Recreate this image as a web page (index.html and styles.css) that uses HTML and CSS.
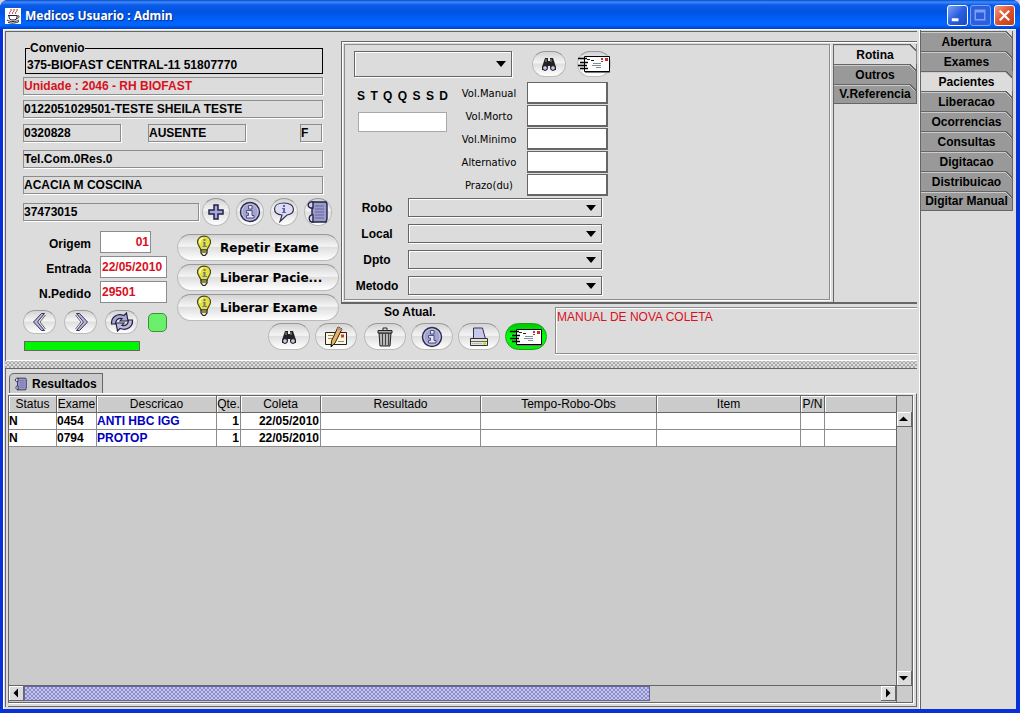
FILE: index.html
```html
<!DOCTYPE html>
<html lang="pt-BR">
<head>
<meta charset="utf-8">
<title>Medicos Usuario : Admin</title>
<link rel="stylesheet" href="styles.css">
</head>
<body>
<svg class="defs" aria-hidden="true">
  <symbol id="i-binoc" viewBox="0 0 16 16">
    <path d="M4 2h3v3h2V2h3l1 3 2 6v3h-5l-1-4H7l-1 4H1v-3l2-6z" fill="#222"/>
    <path d="M5 3v3M10 3v3" stroke="#999"/>
    <circle cx="4" cy="12" r="2.4" fill="#c5c8f0" stroke="#111"/><circle cx="12" cy="12" r="2.4" fill="#c5c8f0" stroke="#111"/>
  </symbol>
  <symbol id="i-mail" viewBox="0 0 34 20">
    <path d="M8 5h25v14H8z" fill="#777"/>
    <path d="M7.500 2.500h25v15h-25z" fill="#fff" stroke="#000"/>
    <path d="M1 4.500h9M3 8.500h8M1 11.500h9M3 14.500h8" stroke="#000" stroke-width="1.500"/>
    <path d="M10 5.500h3M14 6.500h3" stroke="#222"/>
    <path d="M16 9.500h8M15 11.500h9M19 13.500h5" stroke="#7a8f9a"/>
    <path d="M24 4h2v2h-2zM24 7h2v1h-2zM28 4h3v3h-3z" fill="#b33"/>
  </symbol>
  <symbol id="i-info" viewBox="0 0 22 22">
    <circle cx="11" cy="11" r="9.500" fill="#a3a3d0" stroke="#28284c" stroke-width="1.400"/>
    <circle cx="11" cy="11" r="8" fill="none" stroke="#c5c5e6"/>
    <path d="M9.500 4.500h3.500v3.500H9.500zM7.500 9.500h5.500v5h2v2.500H7.500v-2.500h2v-2.500h-2z" fill="#e4e4fa" stroke="#45456e" stroke-width=".9"/>
  </symbol>
  <symbol id="i-bubble" viewBox="0 0 22 22">
    <path d="M11 2c6 0 9.500 2.500 9.500 6 0 3-2.500 5.500-6.500 6l-7 6.500 2-6.500C4 13.500 1.500 11.500 1.500 8S5 2 11 2z" fill="#dcdcf3" stroke="#33334f" stroke-width="1.200"/>
    <path d="M10 4h2v2h-2zM9 7h3v4h1v1H9v-1h1V8H9z" fill="#6464a8"/>
  </symbol>
  <symbol id="i-plus" viewBox="0 0 18 18">
    <path d="M7 2h4v5h5v4h-5v5H7v-5H2V7h5z" fill="#a7a7dd" stroke="#20204a" stroke-width="1.500"/>
  </symbol>
  <symbol id="i-scroll" viewBox="0 0 24 24">
    <path d="M6 2h14l1 2v15l-1 3H6z" fill="#9c9ccb" stroke="#222244" stroke-width="1.400"/>
    <path d="M7 2C1 1 1 8 5 8h2zM7 15c-5-1-5 7 0 7z" fill="#d3d3ee" stroke="#222244" stroke-width="1.400"/>
    <path d="M9 6h9M9 9h9M9 12h9M9 15h9M9 18h9" stroke="#6464a0"/>
  </symbol>
  <symbol id="i-bulb" viewBox="0 0 16 22">
    <path d="M8 1.200c4 0 6.500 2.500 6.500 6 0 3-2.500 4.500-3.500 8H5C4 11.700 1.500 10.200 1.500 7.200c0-3.500 2.500-6 6.500-6z" fill="#e4e23c" stroke="#4a4a10" stroke-width="1.200"/>
    <path d="M4 8c-.5-3 1-5 3-5" stroke="#fffecb" stroke-width="1.500" fill="none"/>
    <path d="M7.500 4h2v2h-2zM7 7h2.500v4H11v1H6.500v-1h1V8H7z" fill="#77778a"/>
    <path d="M5 15h6v3l-2 2.500H7L5 18z" fill="#eeee9a" stroke="#222" stroke-width="1.200"/>
    <path d="M5.500 17h5" stroke="#222"/>
  </symbol>
  <symbol id="i-left" viewBox="0 0 20 20">
    <path d="M11.500 1.500h3L7.500 10l7 8.500h-3L3.500 10z" fill="#b5b5df" stroke="#33334f"/>
    <path d="M15.500 3L10 10l5.500 7" fill="none" stroke="#666"/>
  </symbol>
  <symbol id="i-right" viewBox="0 0 20 20">
    <path d="M8.500 1.500h-3l7 8.500-7 8.500h3l8-8.500z" fill="#b5b5df" stroke="#33334f"/>
    <path d="M4.500 3L10 10l-5.500 7" fill="none" stroke="#666"/>
  </symbol>
  <symbol id="i-refresh" viewBox="0 0 24 22">
    <path d="M1.500 13C1 6 7 2 14 4.500l2.500-2.500 1.500 8h-8l2-2.500C8 7 5.500 9 5.500 13z" fill="#a7a7d6" stroke="#22223c" stroke-width="1.200"/>
    <path d="M22.500 9c.5 7-5.500 11-12.500 8.500L7.500 20 6 12h8l-2 2.500c4 .5 6.500-1.500 6.500-5.500z" fill="#b9b9e2" stroke="#22223c" stroke-width="1.200"/>
  </symbol>
  <symbol id="i-edit" viewBox="0 0 24 22">
    <path d="M1.500 6.500h21v12h-21z" fill="#fff6dc" stroke="#222"/>
    <path d="M4 9.500h5M4 12.500h5M14 15.500h6" stroke="#887"/>
    <path d="M17 8.500h3v3h-3z" fill="#d32"/>
    <path d="M14 1l4 2-7 14-4 4 .5-6z" fill="#e0b56a" stroke="#332200"/>
    <path d="M7 21l.3-3 2 1.500z" fill="#111"/><path d="M14 1l4 2-1 2-4-2z" fill="#cc8c8c"/>
  </symbol>
  <symbol id="i-trash" viewBox="0 0 18 20">
    <path d="M3 6h12l-1 13H4z" fill="#a3a3a3" stroke="#222"/>
    <path d="M6.500 7v11M9.500 7v11M12.500 7v11" stroke="#444"/><path d="M5 7v11M8 7v11M11 7v11" stroke="#ddd" stroke-width=".7"/>
    <path d="M2 3.500h14v2.500H2z" fill="#aaa" stroke="#222"/><path d="M7 3V1h4v2" fill="none" stroke="#222"/>
  </symbol>
  <symbol id="i-print" viewBox="0 0 20 22">
    <path d="M4.500 2h9l3 11h-12z" fill="#c7c7ee" stroke="#33334f"/>
    <path d="M1.500 12.500h17v7h-17z" fill="#e6e6d8" stroke="#333"/>
    <path d="M2 15.500h16" stroke="#666"/><path d="M3 17.500h10" stroke="#bbb"/><path d="M14 16.500h3v2h-3z" fill="#c9d800"/>
  </symbol>
  <symbol id="i-java" viewBox="0 0 16 16">
    <path d="M0 0h16v16H0z" fill="#fff"/>
    <path d="M5 6c-2-2 2-2 1-5M8 6c-2-2 2-2 1-5M11 6c-2-2 2-2 1-5" fill="none" stroke="#c22"/>
    <path d="M3 7.500h9M4 8c0 3 1 4 4 4s4-1 4-4M12 8c3-1 3 2-1 3M2 12c3 2 9 2 12 0M3 14.500c3 1 8 1 11-1" fill="none" stroke="#223"/>
  </symbol>
</svg>

<div class="window">
  <header class="titlebar">
    <svg class="titlebar__icon"><use href="#i-java"/></svg>
    <h1 class="titlebar__text">Medicos Usuario : Admin</h1>
    <button class="winbtn" aria-label="Minimizar"><svg viewBox="0 0 20 20"><path d="M4 13h7v3H4z" fill="#fff"/></svg></button>
    <button class="winbtn winbtn--dim" aria-label="Maximizar"><svg viewBox="0 0 20 20"><path d="M4.500 4.500h10v10h-10zM4 6h11" fill="none" stroke="#7da2f2" stroke-width="1.500"/></svg></button>
    <button class="winbtn winbtn--close" aria-label="Fechar"><svg viewBox="0 0 20 20"><path d="M5 5l10 10M15 5L5 15" stroke="#fff" stroke-width="2.300"/></svg></button>
  </header>

  <div class="client">
    <main class="work">
      <section class="top">
        <div class="patient">
          <fieldset class="group">
            <legend>Convenio</legend>
            <input class="group__input" aria-label="Convenio" value="375-BIOFAST CENTRAL-11 51807770">
          </fieldset>
          <input class="field field--red" aria-label="Unidade" value="Unidade : 2046 - RH BIOFAST">
          <input class="field field--near" aria-label="Paciente" value="0122051029501-TESTE SHEILA TESTE">
          <div class="trio">
            <input class="field trio__half" aria-label="Registro" value="0320828">
            <input class="field trio__half" aria-label="Situacao" value="AUSENTE">
            <input class="field trio__sex" aria-label="Sexo" value="F">
          </div>
          <input class="field field--far" aria-label="Telefone" value="Tel.Com.0Res.0">
          <input class="field field--far" aria-label="Medico" value="ACACIA M COSCINA">
          <div class="phone">
            <input class="field phone__input" aria-label="Numero" value="37473015">
            <div class="rounds">
              <button class="pill pill--round" aria-label="Adicionar"><svg class="s18"><use href="#i-plus"/></svg></button>
              <button class="pill pill--round" aria-label="Informacao"><svg class="s22"><use href="#i-info"/></svg></button>
              <button class="pill pill--round" aria-label="Comentario"><svg class="s22"><use href="#i-bubble"/></svg></button>
              <button class="pill pill--round" aria-label="Historico"><svg class="s24"><use href="#i-scroll"/></svg></button>
            </div>
          </div>
          <div class="lower">
            <div class="order">
              <div class="order__grid">
                <label for="origem">Origem</label><input id="origem" class="box box--short" value="01">
                <label for="entrada">Entrada</label><input id="entrada" class="box" value="22/05/2010">
                <label for="pedido">N.Pedido</label><input id="pedido" class="box" value="29501">
              </div>
              <div class="nav">
                <button class="pill pill--nav" aria-label="Anterior"><svg class="s20"><use href="#i-left"/></svg></button>
                <button class="pill pill--nav" aria-label="Proximo"><svg class="s20"><use href="#i-right"/></svg></button>
                <button class="pill pill--nav" aria-label="Atualizar"><svg class="s24"><use href="#i-refresh"/></svg></button>
                <span class="lamp"></span>
              </div>
              <div class="bar"></div>
            </div>
            <div class="actions">
              <button class="pill pill--wide"><svg class="bulb"><use href="#i-bulb"/></svg>Repetir Exame</button>
              <button class="pill pill--wide"><svg class="bulb"><use href="#i-bulb"/></svg>Liberar Pacie...</button>
              <button class="pill pill--wide"><svg class="bulb"><use href="#i-bulb"/></svg>Liberar Exame</button>
            </div>
          </div>
        </div>

        <div class="right">
          <div class="panel">
            <div class="routine">
              <div class="routine__head">
                <span class="combo combo--tall"><select aria-label="Exame"><option></option></select></span>
                <button class="pill pill--mid" aria-label="Procurar"><svg class="s16"><use href="#i-binoc"/></svg></button>
                <button class="pill pill--mid pill--last" aria-label="Enviar"><svg class="mail"><use href="#i-mail"/></svg></button>
              </div>
              <div class="routine__mid">
                <div class="week">
                  <div class="week__days"><span>S</span><span>T</span><span>Q</span><span>Q</span><span>S</span><span>S</span><span>D</span></div>
                  <input class="week__input" aria-label="Dias da semana">
                </div>
                <div class="volumes">
                  <label for="v1">Vol.Manual</label><input id="v1" class="vol">
                  <label for="v2">Vol.Morto</label><input id="v2" class="vol">
                  <label for="v3">Vol.Minimo</label><input id="v3" class="vol">
                  <label for="v4">Alternativo</label><input id="v4" class="vol">
                  <label for="v5">Prazo(du)</label><input id="v5" class="vol">
                </div>
              </div>
              <div class="combos">
                <label for="robo">Robo</label><span class="combo"><select id="robo"><option></option></select></span>
                <label for="local">Local</label><span class="combo"><select id="local"><option></option></select></span>
                <label for="dpto">Dpto</label><span class="combo"><select id="dpto"><option></option></select></span>
                <label for="metodo">Metodo</label><span class="combo"><select id="metodo"><option></option></select></span>
              </div>
            </div>
            <nav class="tabs tabs--inner">
              <button class="tab tab--on">Rotina</button>
              <button class="tab">Outros</button>
              <button class="tab">V.Referencia</button>
            </nav>
          </div>
          <div class="footer">
            <div class="tools">
              <span class="tools__title">So Atual.</span>
              <div class="tools__row">
                <button class="pill pill--tool" aria-label="Procurar exame"><svg class="s16"><use href="#i-binoc"/></svg></button>
                <button class="pill pill--tool" aria-label="Editar"><svg class="s24"><use href="#i-edit"/></svg></button>
                <button class="pill pill--tool" aria-label="Excluir"><svg class="s20"><use href="#i-trash"/></svg></button>
                <button class="pill pill--tool" aria-label="Informacao do exame"><svg class="s22"><use href="#i-info"/></svg></button>
                <button class="pill pill--tool" aria-label="Imprimir"><svg class="s22"><use href="#i-print"/></svg></button>
                <button class="pill pill--tool pill--green" aria-label="Enviar exame"><svg class="mail"><use href="#i-mail"/></svg></button>
              </div>
            </div>
            <textarea class="note" aria-label="Observacao">MANUAL DE NOVA COLETA</textarea>
          </div>
        </div>
      </section>

      <div class="splitter"></div>

      <section class="bottom">
        <button class="restab"><svg class="s14"><use href="#i-scroll"/></svg>Resultados</button>
        <div class="sheet">
          <div class="grid">
            <div class="grid__view">
              <table class="results">
                <colgroup><col class="c48"><col class="c40"><col class="c120"><col class="c24"><col class="c80"><col class="c160"><col class="c176"><col class="c144"><col class="c24"><col></colgroup>
                <thead><tr><th>Status</th><th>Exame</th><th>Descricao</th><th>Qte.</th><th>Coleta</th><th>Resultado</th><th>Tempo-Robo-Obs</th><th>Item</th><th>P/N</th><th></th></tr></thead>
                <tbody>
                  <tr><td>N</td><td>0454</td><td class="blue">ANTI HBC IGG</td><td class="num">1</td><td class="num">22/05/2010</td><td></td><td></td><td></td><td></td><td></td></tr>
                  <tr><td>N</td><td>0794</td><td class="blue">PROTOP</td><td class="num">1</td><td class="num">22/05/2010</td><td></td><td></td><td></td><td></td><td></td></tr>
                </tbody>
              </table>
            </div>
            <div class="vscroll">
              <button class="sb" aria-label="Subir"><svg viewBox="0 0 14 14"><path d="M2 9h9L6.500 4.500z"/></svg></button>
              <span class="vscroll__track"></span>
              <button class="sb" aria-label="Descer"><svg viewBox="0 0 14 14"><path d="M2 5h9L6.500 9.500z"/></svg></button>
            </div>
            <div class="hscroll">
              <button class="sb" aria-label="Esquerda"><svg viewBox="0 0 14 14"><path d="M9 2.500v9L4.500 7z"/></svg></button>
              <span class="hscroll__track"><span class="hscroll__thumb"></span></span>
              <button class="sb" aria-label="Direita"><svg viewBox="0 0 14 14"><path d="M5 2.500v9L9.500 7z"/></svg></button>
            </div>
            <div class="grid__corner"></div>
          </div>
        </div>
      </section>
    </main>

    <nav class="tabs tabs--outer">
      <button class="tab">Abertura</button>
      <button class="tab">Exames</button>
      <button class="tab tab--on">Pacientes</button>
      <button class="tab">Liberacao</button>
      <button class="tab">Ocorrencias</button>
      <button class="tab">Consultas</button>
      <button class="tab">Digitacao</button>
      <button class="tab">Distribuicao</button>
      <button class="tab">Digitar Manual</button>
    </nav>
  </div>
</div>
</body>
</html>
```
FILE: styles.css
```css
:root {
  --face: #dcdcdc;
  --mid: #cbcbcb;
  --tab: #999;
  --line: #666;
  --soft: #8c8c8c;
  --red: #d9101c;
}
* { box-sizing: border-box; }
body {
  margin: 0;
  background: #d4d0e4;
  font: bold 12px/14px "Liberation Sans", Arial, sans-serif;
  color: #000;
}
button, input, select, textarea {
  font: inherit;
  color: inherit;
  margin: 0;
  padding: 0;
  border: 0;
  border-radius: 0;
  background: none;
}
button { display: flex; align-items: center; justify-content: center; }
svg { display: block; flex: none; }
.defs { position: absolute; width: 0; height: 0; }
.s14 { width: 14px; height: 14px; }
.s16 { width: 16px; height: 16px; }
.s18 { width: 18px; height: 18px; }
.s20 { width: 20px; height: 20px; }
.s22 { width: 22px; height: 22px; }
.s24 { width: 24px; height: 24px; }
.mail { width: 34px; height: 20px; }

/* window frame */
.window {
  display: flex;
  flex-direction: column;
  min-height: 100vh;
  border-radius: 8px 8px 0 0;
  overflow: hidden;
  background: #0831d9;
}
.titlebar {
  display: flex;
  align-items: center;
  gap: 2px;
  height: 29px;
  padding: 2px 5px 0 5px;
  background: linear-gradient(#0a48c8 0, #3c8cff 2px, #0b5be8 5px, #0054e3 12px, #0061fa 20px, #0066ff 25px, #0040c8 29px);
}
.titlebar__icon { width: 16px; height: 16px; }
.titlebar__text {
  flex: 1;
  margin: 0 0 0 2px;
  font: bold 12px/16px "Noto Sans", "Open Sans", sans-serif;
  color: #fff;
  text-shadow: 1px 1px 1px #0a2a80;
}
.winbtn {
  width: 21px;
  height: 21px;
  border: 1px solid #fff;
  border-radius: 3px;
  background: linear-gradient(135deg, #7da4f5, #2a5ee0 50%, #1c48c0);
}
.winbtn svg { width: 19px; height: 19px; }
.winbtn--dim { border-color: #7da2f2; background: #2c5fdd; }
.winbtn--close { background: linear-gradient(135deg, #f0a088, #e0502c 50%, #c03c18); margin-left: 1px; }
.client {
  flex: 1;
  display: flex;
  margin: 0 4px 4px 3px;
  background: var(--face);
  border-top: 1px solid #fff;
  border-left: 1px solid #fff;
}
.work {
  flex: 1;
  min-width: 0;
  display: flex;
  flex-direction: column;
  padding: 1px 2px 2px 1px;
  border-right: 1px solid #fff;
}

/* vertical tabs */
.tabs { display: flex; flex-direction: column; border-left: 1px solid var(--line); }
.tabs--outer { width: 96px; padding: 1px 3px 0 0; }
.tabs--inner { width: 84px; margin-left: 3px; }
.tab {
  --fill: var(--tab);
  --corner: var(--tab);
  height: 20px;
  padding-top: 1px;
  border-right: 1px solid var(--line);
  background:
    linear-gradient(225deg, var(--corner) 4px, var(--line) 4px 5px, #ccc 5px 6px, var(--fill) 6px) top right / 7px 7px no-repeat,
    linear-gradient(var(--line) 1px, #ccc 1px 2px, var(--fill) 2px);
}
.tab:first-child { --corner: var(--face); }
.tab:last-child { border-bottom: 1px solid var(--line); }
.tab--on { --fill: var(--face); border-right-color: var(--soft); }
.tab--on + .tab { --corner: var(--face); }

/* upper pane */
.top {
  display: flex;
  border: solid var(--line);
  border-width: 1px 0 0 1px;
  box-shadow: inset 0 -1px #fff;
}
.patient { width: 335px; padding: 9px 0 0 17px; }
.group { margin: 0 18px 0 2px; padding: 0; border: 1px solid #000; }
.group legend { margin-left: 4px; padding: 0; height: 14px; font-weight: bold; }
.group__input { display: block; width: 100%; height: 18px; padding: 2px 0 0 1px; }
.field {
  display: block;
  width: 300px;
  height: 18px;
  border: 1px solid var(--soft);
  box-shadow: 1px 1px #fff;
}
.field--red { margin-top: 3px; color: var(--red); }
.field--near { margin-top: 5px; }
.field--far { margin-top: 8px; }
.trio { display: flex; justify-content: space-between; width: 299px; margin-top: 6px; }
.trio__half { width: 98px; }
.trio__half + .trio__sex { width: 22px; margin-left: 27px; }
.phone { display: flex; align-items: center; gap: 3px; margin-top: 4px; }
.phone__input { width: 176px; }
.rounds { display: flex; gap: 6px; }
.lower { display: flex; gap: 10px; margin-top: 5px; }
.order { width: 144px; }
.order__grid {
  display: grid;
  grid-template-columns: 68px 67px;
  gap: 3px 9px;
  align-items: center;
}
.order__grid label { text-align: right; padding-top: 4px; }
.box {
  width: 67px;
  height: 22px;
  padding: 0 1px;
  background: #fff;
  border: 1px solid var(--soft);
  color: var(--red);
}
.box--short { width: 51px; text-align: right; }
.nav { display: flex; align-items: center; gap: 8px; margin: 7px 0; }
.lamp {
  width: 21px;
  height: 19px;
  margin-left: 2px;
  border: 1px solid #3f8f3f;
  border-radius: 5px;
  background: #6bf06b;
}
.bar { width: 116px; height: 10px; border: 1px solid var(--line); background: #00f500; margin-left: 1px; }
.actions { display: flex; flex-direction: column; gap: 3px; padding-top: 3px; }

/* glossy buttons */
.pill {
  flex: none;
  border: 1px solid #bbb;
  border-top-color: #999;
  border-radius: 14px;
  background: linear-gradient(#d4d4d4, #f4f4f4 45%, #dfdfdf 50%, #fff);
}
.pill--round { width: 28px; height: 28px; }
.pill--nav { width: 33px; height: 24px; }
.pill--mid { width: 34px; height: 26px; }
.pill--tool { width: 42px; height: 27px; }
.pill--green { background: linear-gradient(#00c800, #00ff10 50%, #0ce80c); border-color: #19a019; }
.pill--wide {
  width: 162px;
  height: 27px;
  justify-content: flex-start;
  gap: 8px;
  padding-left: 18px;
  font: bold 12px/14px "DejaVu Sans", sans-serif;
  white-space: nowrap;
}
.bulb { width: 16px; height: 22px; margin-top: -4px; }

/* routine panel */
.right { flex: 1; min-width: 0; display: flex; flex-direction: column; }
.panel {
  display: flex;
  margin-top: 9px;
  border: solid var(--line);
  border-width: 1px 0 2px 1px;
  box-shadow: inset 1px 1px #fff;
  padding: 2px 0 0 2px;
}
.routine {
  flex: 1;
  padding: 6px 0 4px 9px;
  margin-bottom: 2px;
  border: 1px solid var(--soft);
  box-shadow: 1px 1px #fff;
}
.routine__head { display: flex; align-items: center; }
.routine__head .pill { margin-left: 20px; }
.routine__head .pill--last { margin-left: 11px; }
.combo {
  display: block;
  position: relative;
  width: 194px;
  height: 19px;
  border: 1px solid var(--line);
  box-shadow: 1px 1px #fff, inset 1px 1px #fff;
}
.combo--tall { width: 158px; height: 26px; }
.combo select { display: block; width: 100%; height: 100%; appearance: none; }
.combo::after {
  content: "";
  position: absolute;
  right: 5px;
  top: calc(50% - 3px);
  border: solid transparent;
  border-width: 6px 5px 0;
  border-top-color: #000;
  pointer-events: none;
}
.routine__mid { display: flex; gap: 9px; margin-top: 5px; }
.week { width: 94px; padding: 7px 0 0 3px; }
.week__days { display: flex; justify-content: space-between; }
.week__input { display: block; width: 89px; height: 20px; margin-top: 9px; margin-left: 1px; background: #fff; border: 1px solid #aaa; }
.volumes {
  display: grid;
  grid-template-columns: 64px 81px;
  gap: 1px 6px;
  align-items: center;
  text-align: center;
  font: 10px/14px "DejaVu Sans", sans-serif;
}
.volumes label { padding-top: 2px; }
.vol { height: 22px; background: #fff; border: 1px solid var(--line); border-width: 1px 2px 2px 1px; }
.combos {
  display: grid;
  grid-template-columns: 46px 194px;
  gap: 7px 8px;
  align-items: center;
  text-align: center;
  margin-top: 2px;
}

/* footer tools */
.footer { display: flex; padding: 1px 0 7px; }
.tools { margin-left: -73px; display: flex; flex-direction: column; }
.tools__title { margin-left: 116px; }
.tools__row { display: flex; gap: 5px; margin-top: 4px; }
.tools__row .pill:nth-child(3) { margin-left: 2px; }
.note {
  flex: 1;
  min-width: 0;
  height: 47px;
  margin: 2px 0 0 8px;
  padding: 2px 1px;
  border: 1px solid var(--soft);
  border-right: 0;
  box-shadow: 0 1px #fff, inset 1px 1px #fff;
  font-weight: normal;
  color: var(--red);
  resize: none;
}

.splitter {
  height: 7px;
  background:
    radial-gradient(circle at 1px 1px, #aaa 1px, transparent 1px) 0 1px / 4px 4px,
    radial-gradient(circle at 3px 3px, #aaa 1px, transparent 1px) 0 1px / 4px 4px,
    var(--face);
}

/* results */
.bottom {
  flex: 1;
  display: flex;
  flex-direction: column;
  align-items: flex-start;
  border: solid var(--line);
  border-width: 1px 0 0 1px;
  padding: 4px 0 0 2px;
}
.restab {
  gap: 4px;
  height: 20px;
  padding: 1px 5px 0 4px;
  margin-left: 1px;
  border: solid var(--line);
  border-width: 1px 1px 0;
  border-radius: 5px 0 0 0;
  background: var(--mid);
}
.sheet {
  flex: 1;
  align-self: stretch;
  display: flex;
  padding: 1px 3px 3px 0;
  border-top: 1px solid #fff;
  border-right: 1px solid var(--line);
  border-bottom: 1px solid var(--line);
}
.grid {
  flex: 1;
  min-width: 0;
  display: grid;
  grid-template-columns: 1fr 15px;
  grid-template-rows: 1fr 16px;
  border: 1px solid var(--line);
  background: var(--mid);
  box-shadow: 1px 1px #fff;
}
.grid__view { border-right: 1px solid var(--line); border-bottom: 1px solid var(--line); min-width: 0; overflow: hidden; }
.results { width: 100%; border-collapse: separate; border-spacing: 0; table-layout: fixed; }
.results th {
  height: 17px;
  padding: 0;
  background: var(--mid);
  border: solid var(--line);
  border-width: 0 1px 1px 0;
  box-shadow: inset 1px 1px #fff;
  font-weight: normal;
  white-space: nowrap;
}
.results td {
  height: 17px;
  padding: 0 1px 0 0;
  background: #fff;
  border: solid var(--soft);
  border-width: 0 1px 1px 0;
}
.results th:last-child, .results td:last-child { border-right: 0; }
.results .num { text-align: right; }
.results .blue { color: #0000c0; }
.c24 { width: 24px; }
.c40 { width: 40px; }
.c48 { width: 48px; }
.c80 { width: 80px; }
.c120 { width: 120px; }
.c144 { width: 144px; }
.c160 { width: 160px; }
.c176 { width: 176px; }
.vscroll { display: flex; flex-direction: column; padding-top: 16px; }
.vscroll__track { flex: 1; border-right: 1px solid #aaa; }
.hscroll { display: flex; border-right: 1px solid var(--line); }
.hscroll__track { flex: 1; }
.hscroll__thumb {
  display: block;
  width: 73%;
  height: 15px;
  border: 1px solid #6464a0;
  background:
    radial-gradient(circle at 1px 1px, #c4c4f0 1px, transparent 1px) 0 0 / 4px 4px,
    radial-gradient(circle at 3px 3px, #c4c4f0 1px, transparent 1px) 0 0 / 4px 4px,
    #8e8ec6;
}
.sb {
  width: 15px;
  height: 15px;
  background: var(--face);
  border: 1px solid var(--line);
  border-width: 0 1px 1px 0;
  box-shadow: inset 1px 1px #fff;
}
.sb svg { width: 14px; height: 14px; }
.grid__corner { background: var(--mid); }
```
